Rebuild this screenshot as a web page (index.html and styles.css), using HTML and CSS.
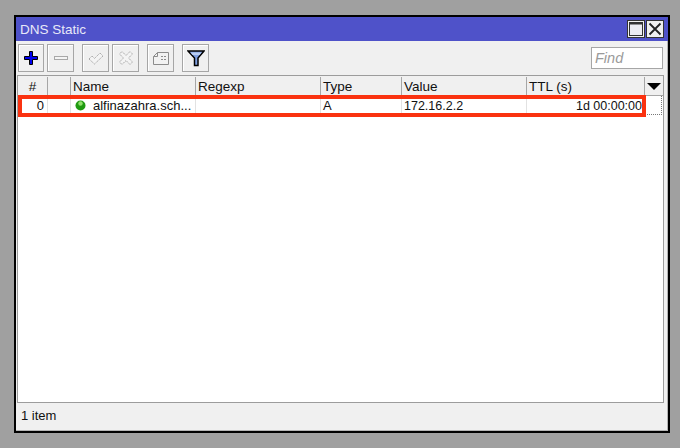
FILE: index.html
```html
<!DOCTYPE html>
<html lang="en">
<head>
<meta charset="utf-8">
<title>DNS Static</title>
<link rel="stylesheet" href="styles.css">
</head>
<body>
<div class="window">
  <div class="titlebar">
    <span class="title">DNS Static</span>
    <div class="winbtns">
      <div class="winbtn"><svg width="16" height="16" viewBox="0 0 16 16"><rect x="1.500" y="1.500" width="13" height="13" fill="#ececf2" stroke="#333"/><path d="M1 2.500h14" stroke="#333" stroke-width="2"/></svg></div>
      <div class="winbtn"><svg width="16" height="16" viewBox="0 0 16 16"><path d="M2.500 2.500l11 11M13.500 2.500l-11 11" stroke="#222" stroke-width="1.800" fill="none"/></svg></div>
    </div>
  </div>
  <div class="toolbar">
    <div class="tool first"><svg width="16" height="16" viewBox="0 0 16 16"><path d="M6.500 1.500h3v5h5v3h-5v5h-3v-5h-5v-3h5z" fill="#0000f0" stroke="#000" stroke-width="1"/></svg></div>
    <div class="tool"><svg width="16" height="16" viewBox="0 0 16 16"><rect x="1.500" y="6.500" width="13" height="3" fill="#f4f4f4" stroke="#a8a8a8"/></svg></div>
    <div class="tool gap"><svg width="16" height="16" viewBox="0 0 16 16"><path d="M1 9l3-3 2.500 2.500L12 3l3 3-8.500 8z" fill="#f4f4f4" stroke="#aaa" stroke-dasharray="1.500 .7"/></svg></div>
    <div class="tool"><svg width="16" height="16" viewBox="0 0 16 16"><path d="M4 1.500l4 4 4-4 2.500 2.500-4 4 4 4-2.500 2.500-4-4-4 4L1.500 12l4-4-4-4z" fill="#f4f4f4" stroke="#aaa" stroke-dasharray="1.500 .7"/></svg></div>
    <div class="tool gap"><svg width="18" height="16" viewBox="0 0 18 16"><path d="M1.500 14.500v-8l4-4h11v12z" fill="#f2f2f2" stroke="#8c8c8c"/><path d="M1.500 6.500h4v-4M9 6.500h2M12 6.500h2M9 9.500h2M12 9.500h2" stroke="#8c8c8c" fill="none"/></svg></div>
    <div class="tool gap"><svg width="18" height="18" viewBox="0 0 18 18"><path d="M1 2h16l-6 7v7.500H7.500V9z" fill="#7f9fe0" stroke="#000" stroke-width="1.500"/><path d="M3.500 3.500h11l-2 2.500h-7z" fill="#b9cdf2"/></svg></div>
    <input class="find" type="text" placeholder="Find">
  </div>
  <div class="table">
    <div class="row head">
      <div class="cell c-num center">#</div>
      <div class="cell c-flag"></div>
      <div class="cell c-name">Name</div>
      <div class="cell c-regexp">Regexp</div>
      <div class="cell c-type">Type</div>
      <div class="cell c-value">Value</div>
      <div class="cell c-ttl">TTL (s)</div>
      <div class="cell c-menu"><svg width="14" height="7" viewBox="0 0 14 7"><path d="M0 0h14L7 7z" fill="#000"/></svg></div>
    </div>
    <div class="row data">
      <div class="cell c-num right">0</div>
      <div class="cell c-flag"></div>
      <div class="cell c-name"><svg class="dot" width="11" height="11" viewBox="0 0 11 11"><circle cx="5.500" cy="5.500" r="5" fill="#1f9a10"/><circle cx="5.500" cy="3.500" r="2.200" fill="#8fe06a"/></svg><span class="trunc">alfinazahra.sch...</span></div>
      <div class="cell c-regexp"></div>
      <div class="cell c-type">A</div>
      <div class="cell c-value digits">172.16.2.2</div>
      <div class="cell c-ttl right digits">1d 00:00:00</div>
      <div class="cell c-rest"></div>
    </div>
    <div class="highlight"></div>
  </div>
  <div class="status">1 item</div>
</div>
</body>
</html>
```
FILE: styles.css
```css
* { box-sizing: border-box; }
html, body { margin: 0; height: 100%; }
body { background: #a0a0a0; font-family: "Liberation Sans", Arial, sans-serif; font-size: 13px; color: #111; padding: 15px 0 0 14px; overflow: hidden; }
.window { width: 656px; height: 418px; background: #f0f0f0; border: 2px solid #000; display: flex; flex-direction: column; padding: 0 4px 0 1px; box-shadow: inset -1px -1px 0 #b4b4b4; }
.titlebar { margin: 0 -4px 0 -1px; height: 24px; background: #4f52c9; display: flex; align-items: center; justify-content: space-between; padding: 0 4px; flex: none; }
.title { color: #e8e8f8; font-size: 13.500px; margin-top: 1px; }
.winbtns { display: flex; gap: 1px; }
.winbtn { width: 18px; height: 18px; background: #f0f0f0; border: 1px solid #333; display: flex; align-items: center; justify-content: center; }
.toolbar { height: 34px; flex: none; display: flex; align-items: center; gap: 3px; padding: 0 1px; }
.tool { width: 27px; height: 28px; border: 1px solid #a6a6a6; background: #f0f0f0; display: flex; align-items: center; justify-content: center; box-shadow: inset 1px 1px 0 #fff; }
.first { width: 26px; }
.gap { margin-left: 5px; }
.find { margin-left: auto; width: 72px; height: 22px; border: 1px solid #a6a6a6; background: #fff; font: italic 14.500px "Liberation Sans", Arial, sans-serif; padding: 0 3px; }
.find::placeholder { color: #9a9a9a; opacity: 1; }
.table { flex: 1; position: relative; background: #fff; border: 1px solid #9c9c9c; }
.row { display: flex; }
.head { height: 20px; background: #f0f0f0; border-bottom: 1px solid #a6a6a6; font-size: 13.500px; padding-top: 1px; }
.data { height: 19px; }
.cell { padding: 0 2px; display: flex; align-items: center; white-space: nowrap; border-right: 1px solid #a6a6a6; }
.data .cell { border-right-color: #e2e2e2; }
.digits { font-size: 12.500px; }
.c-num { width: 30px; }
.c-flag { width: 23px; }
.c-name { width: 125px; }
.c-regexp { width: 125px; }
.c-type { width: 81px; }
.c-value { width: 125px; }
.c-ttl { width: 118px; }
.c-menu { width: 18px; justify-content: center; border-right: none; padding: 0; }
.data .c-rest { width: 17px; border-right: 1px dotted #777; border-bottom: 1px dotted #777; }
.center { justify-content: center; }
.right { justify-content: flex-end; padding-right: 2px; }
.data .c-num.right { padding-right: 3px; }
.dot { margin: 0 7px 0 2px; flex: none; }
.trunc { overflow: hidden; }
.highlight { position: absolute; left: 0; top: 19px; width: 628px; height: 22px; border: 4px solid #fa3210; }
.status { height: 28px; flex: none; display: flex; align-items: center; padding: 0 0 4px 4px; }
```
